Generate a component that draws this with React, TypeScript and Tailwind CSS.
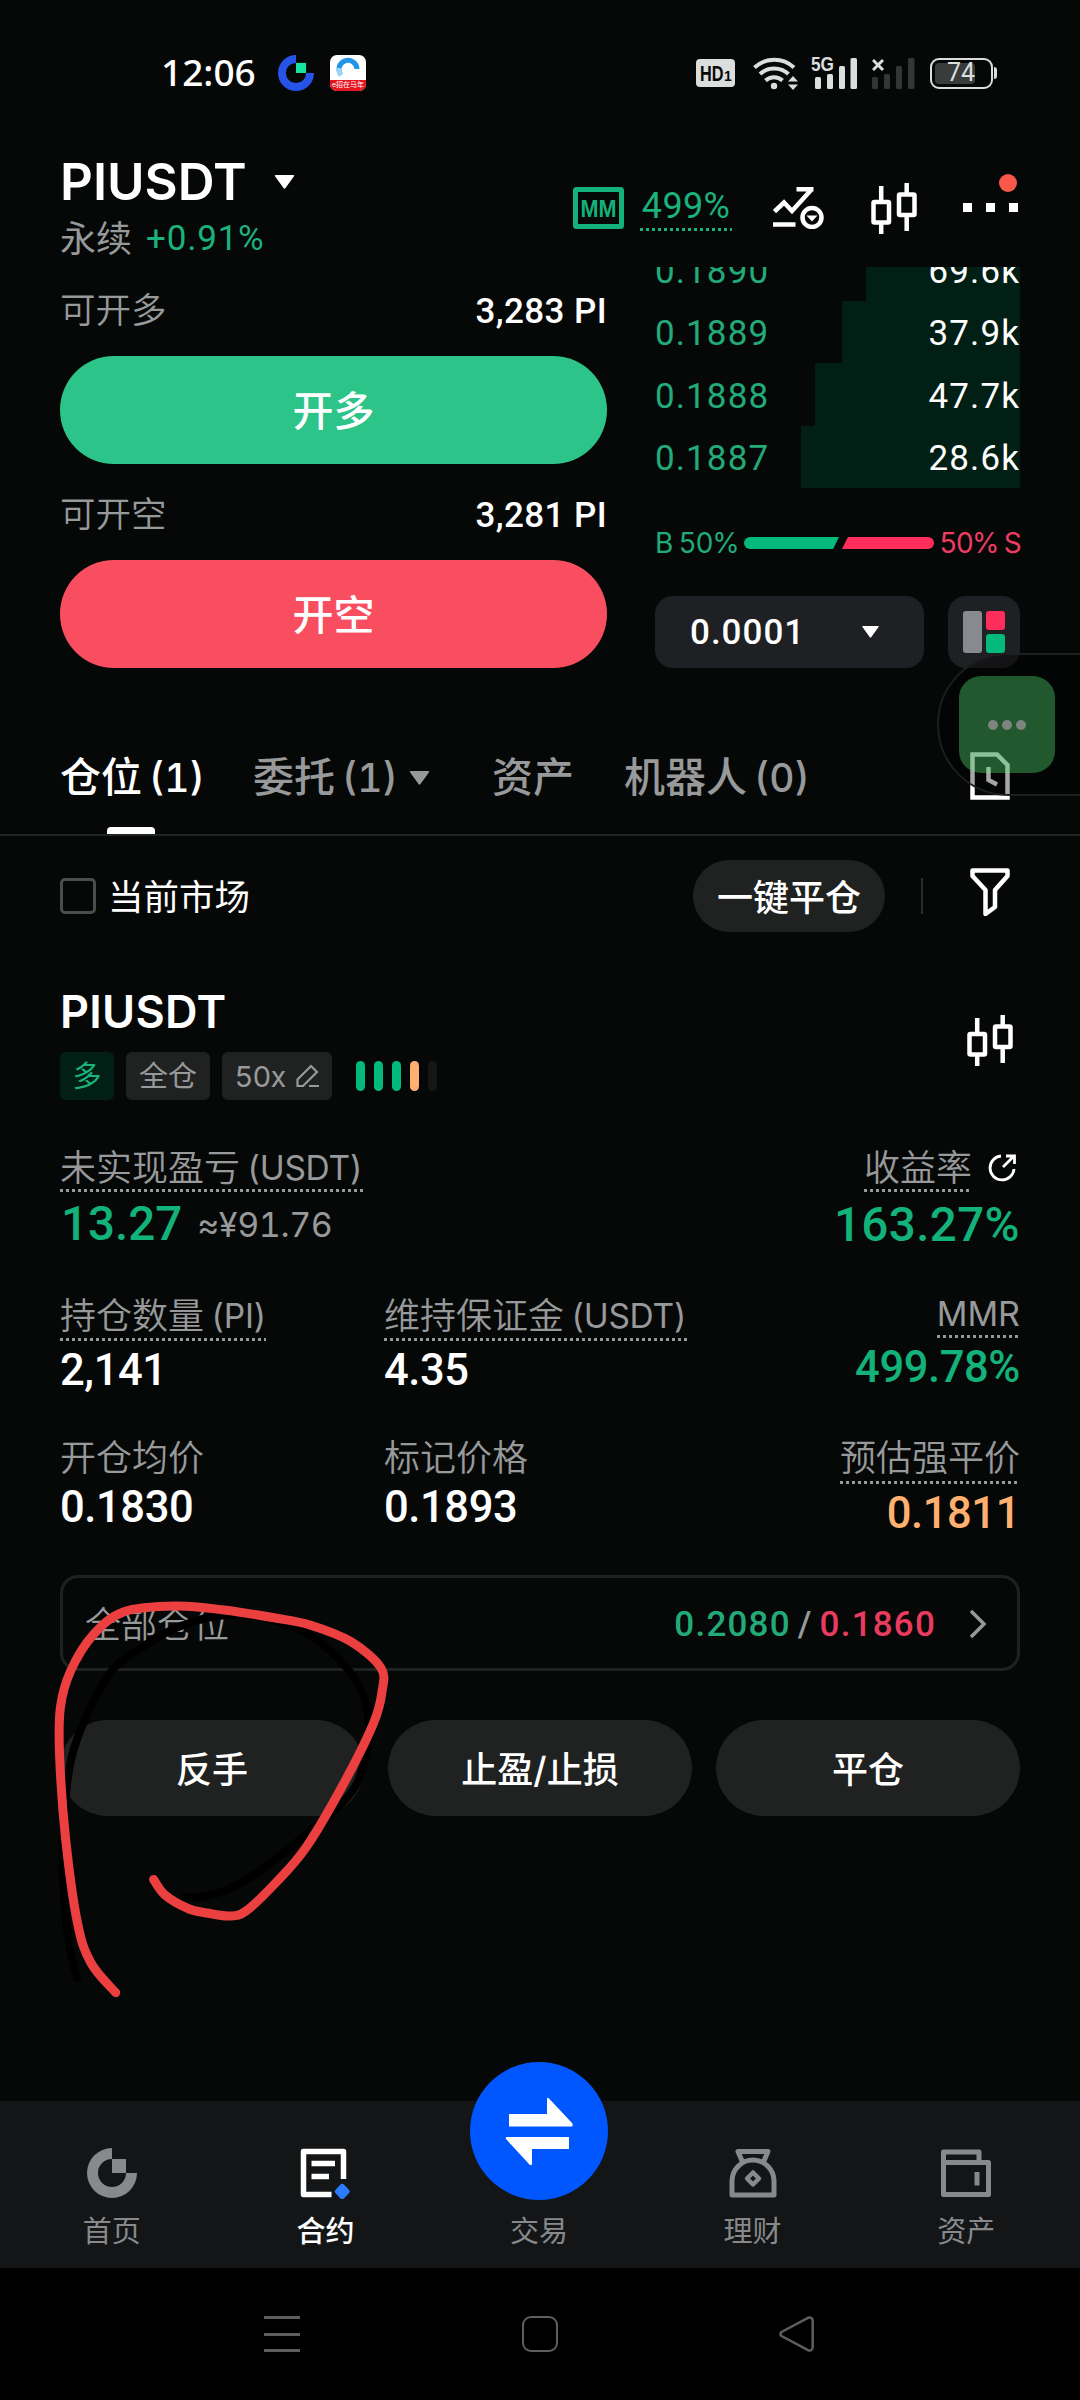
import type { ReactNode } from 'react'
import clsx from 'clsx'

const bids = [
  { price: '0.1890', size: '69.6k', depth: 154 },
  { price: '0.1889', size: '37.9k', depth: 178 },
  { price: '0.1888', size: '47.7k', depth: 205 },
  { price: '0.1887', size: '28.6k', depth: 219 },
]

const riskBars = ['bg-[#04b97c]', 'bg-[#04b97c]', 'bg-[#04b97c]', 'bg-[#ffb06f]', 'bg-[#151717]']

type Point = [number, number]

const redStroke: Point[] = [
  [153.6, 1879.5], [165, 1895], [188, 1908.5], [207, 1913], [229, 1916], [246, 1911], [275.5, 1883],
  [306.5, 1846.7], [344, 1783], [373.6, 1723], [382, 1691.7], [381, 1668], [351, 1641.7], [310, 1625],
  [275.5, 1618], [224, 1610], [175.6, 1606], [124, 1611.7], [93, 1635], [70.6, 1671], [60.5, 1706.7],
  [59.5, 1753], [65.4, 1836.7], [77.5, 1923], [91, 1963], [115.7, 1992.7],
]

const shadowStroke: Point[] = [
  [186, 1896.7], [207, 1896], [241, 1883], [286, 1851], [344, 1801], [363, 1766.7], [368.5, 1720],
  [356, 1680], [317, 1640], [275, 1621], [227, 1615], [179, 1626.7], [137.7, 1650], [110, 1673],
  [86, 1717], [71, 1760], [64.5, 1813], [63, 1880], [69, 1943], [77, 1978],
]

// Catmull-Rom through the points, written as cubic beziers
function smoothPath(pts: Point[]) {
  let d = `M${pts[0][0]} ${pts[0][1]}`
  for (let i = 0; i < pts.length - 1; i++) {
    const p0 = pts[i - 1] ?? pts[i]
    const p1 = pts[i]
    const p2 = pts[i + 1]
    const p3 = pts[i + 2] ?? p2
    d += ` C${p1[0] + (p2[0] - p0[0]) / 6} ${p1[1] + (p2[1] - p0[1]) / 6} ${p2[0] - (p3[0] - p1[0]) / 6} ${p2[1] - (p3[1] - p1[1]) / 6} ${p2[0]} ${p2[1]}`
  }
  return d
}

function Caret({ className }: { className?: string }) {
  return (
    <svg viewBox="0 0 20 14" className={className} fill="currentColor">
      <path d="M1 0H19Q20.300 0 19.500 1.200L11 13Q10 14.400 9 13L.5 1.200Q-.3 0 1 0Z" />
    </svg>
  )
}

function Candles() {
  return (
    <svg width="46" height="52" viewBox="0 0 46 52" fill="none" stroke="#fff" strokeWidth="4.500">
      <rect x="2.500" y="19" width="15.500" height="20.500" rx="1" />
      <rect x="28" y="11.500" width="15.500" height="20.500" rx="1" />
      <path d="M10.200 3v15M10.200 40v11M35.700 0v11M35.700 33v15" />
    </svg>
  )
}

function BrandMark({ ring, square, className }: { ring: string; square: string; className?: string }) {
  return (
    <svg viewBox="0 0 50 50" className={className}>
      <path d="M25 0A25 25 0 1 0 50 25H39A14 14 0 1 1 25 11Z" fill={ring} />
      <rect x="25" y="11" width="14" height="14" fill={square} />
    </svg>
  )
}

function Dots({ className }: { className?: string }) {
  return (
    <div
      className={clsx(
        'h-[3px] w-full bg-[repeating-linear-gradient(90deg,currentColor_0_3px,transparent_3px_6px)]',
        className,
      )}
    />
  )
}

function StatusBar() {
  return (
    <div className="h-[146px] shrink-0 flex items-center pl-[161px] pr-[83px]">
      <span className="w-[117px] -mt-[3px] font-['Noto_Sans'] text-[37px] leading-none font-medium">12:06</span>
      <BrandMark ring="#2654e8" square="#19e3a0" className="size-9" />
      <div className="ml-4 size-9 rounded-[7px] overflow-hidden bg-white flex flex-col items-center justify-between">
        <svg width="24" height="24" viewBox="0 0 24 24" className="mt-px" fill="none">
          <path d="M5 19A9 9 0 1 1 21 13" stroke="#2196e8" strokeWidth="5" />
          <path d="M5 19A9 9 0 0 1 3 12" stroke="#9bd4f8" strokeWidth="5" />
        </svg>
        <div className="w-full h-[11px] bg-[#e5141f] text-[7px] leading-[10px] text-center whitespace-nowrap">e招在马年</div>
      </div>

      <div className="ml-auto flex items-center text-[#dcdedd]">
        <svg width="39" height="28" viewBox="0 0 39 28" fill="#060807">
          <rect width="39" height="28" rx="4" fill="#dcdedd" />
          <text x="4" y="22" fontFamily="Liberation Sans" fontWeight="700" fontSize="22.500" textLength="23.500" lengthAdjust="spacingAndGlyphs">HD</text>
          <text x="28" y="22" fontFamily="Liberation Sans" fontWeight="700" fontSize="14">1</text>
        </svg>
        <svg width="46" height="36" viewBox="0 0 46 36" className="ml-[18px]" fill="none" stroke="#dcdedd" strokeWidth="4">
          <path d="M1.500 12.500A29 29 0 0 1 41 12.500M7 19A21 21 0 0 1 35.500 19M12.500 25.500A12.500 12.500 0 0 1 29.500 25.500" />
          <circle cx="21" cy="31" r="3.200" fill="#dcdedd" stroke="none" />
          <path d="M40 21l5 5.500H35zM40 35l-5-5.500h10z" fill="#dcdedd" stroke="none" />
        </svg>
        <svg width="48" height="34" viewBox="0 0 48 34" className="ml-3 overflow-visible" fill="#dcdedd">
          <text x="0" y="15" fontFamily="Liberation Sans" fontWeight="700" fontSize="20" textLength="23" lengthAdjust="spacingAndGlyphs">5G</text>
          <rect x="4" y="21" width="6" height="12" rx="1.500" />
          <rect x="16" y="18" width="6" height="15" rx="1.500" />
          <rect x="28" y="10" width="6" height="23" rx="1.500" />
          <rect x="39.500" y="2" width="6.500" height="31" rx="1.500" />
        </svg>
        <svg width="46" height="34" viewBox="0 0 46 34" className="ml-[13px]" fill="#343636">
          <path d="M1 4L11 14M11 4L1 14" stroke="#dcdedd" strokeWidth="3" />
          <rect x="0" y="21" width="6" height="12" rx="1.500" />
          <rect x="12" y="18" width="6" height="15" rx="1.500" />
          <rect x="24" y="10" width="6" height="23" rx="1.500" />
          <rect x="36" y="2" width="6.500" height="31" rx="1.500" />
        </svg>
        <div className="ml-3 w-[63px] h-[31px] rounded-[9px] border-[2.500px] border-[#dcdedd] p-[3px]">
          <div className="relative w-10 h-full rounded-[4px] bg-[#3a3b3b]">
            <span className="absolute left-[12px] top-[-3px] font-[Roboto] text-[25px] leading-[26px]">74</span>
          </div>
        </div>
        <div className="ml-px w-[3px] h-3 rounded-r bg-[#dcdedd]" />
      </div>
    </div>
  )
}

function Header() {
  return (
    <div className="h-[121px] shrink-0 flex justify-between pl-[60px] pr-[60px]">
      <div className="pt-[9px]">
        <div className="flex items-center">
          <h1 className="w-[214px] text-[51px] leading-[54px] font-semibold">PIUSDT</h1>
          <Caret className="w-[21px] h-[14px]" />
        </div>
        <div className="mt-3 flex items-center gap-[14px] leading-9">
          <span className="text-4xl leading-9 text-[#98999a]">永续</span>
          <span className="font-[Roboto] text-[35px] leading-9 tracking-[0.800px] text-[#1bb27c]">+0.91%</span>
        </div>
      </div>
      <div className="flex items-start h-full">
        <svg width="51" height="42" viewBox="0 0 51 42" className="mt-[41px]" fill="none">
          <rect x="2.500" y="2.500" width="46" height="37" rx="1" stroke="#13b27a" strokeWidth="5" />
          <text x="7.500" y="29.500" fontFamily="Liberation Sans" fontWeight="700" fontSize="24" fill="#13b27a" textLength="36" lengthAdjust="spacingAndGlyphs">MM</text>
        </svg>
        <div className="ml-4 mt-[40px] w-[92px] text-[#1bb27c]">
          <div className="font-[Roboto] text-[36px] leading-[40px] tracking-[0.300px] text-center whitespace-nowrap">499%</div>
          <Dots className="mt-[2px]" />
        </div>
        <svg width="51" height="42" viewBox="0 0 51 42" className="ml-[41px] mt-[41px]" fill="none" stroke="#fff" strokeWidth="4.500">
          <path d="M1.500 24.500L11 15.500L19 24L38.500 2.500M23.500 2.300H40.500M0 37.500H22.500" />
          <circle cx="39" cy="30.500" r="9.500" />
          <path d="M33.500 28.500h11L39 34.500z" fill="#fff" stroke="none" />
        </svg>
        <div className="ml-[47px] mt-[37px]">
          <Candles />
        </div>
        <div className="relative ml-[46px] mt-[57px] flex gap-[14px]">
          <i className="size-[9px] bg-white" />
          <i className="size-[9px] bg-white" />
          <i className="size-[9px] bg-white" />
          <i className="absolute right-px -top-[29px] size-[18px] rounded-full bg-[#f8594a]" />
        </div>
        <div className="w-[2px]" />
      </div>
    </div>
  )
}

function OrderSide({ label, amount, action, tone }: { label: string; amount: string; action: string; tone: string }) {
  return (
    <div>
      <div className="h-11 pt-[2px] flex items-center justify-between">
        <span className="text-[35.500px] leading-none font-[350] text-[#98999a]">{label}</span>
        <span className="font-[Roboto] text-[35px] leading-none font-medium tracking-[0.400px]">{amount}</span>
      </div>
      <button className={clsx('mt-6 w-full h-[108px] pt-[3px] rounded-full text-[41px] font-medium flex items-center justify-center', tone)}>
        {action}
      </button>
    </div>
  )
}

function TradePanel() {
  return (
    <div className="flex justify-between px-[60px]">
      <div className="w-[547px] pt-[21px] flex flex-col gap-7">
        <OrderSide label="可开多" amount="3,283 PI" action="开多" tone="bg-[#2cc489]" />
        <OrderSide label="可开空" amount="3,281 PI" action="开空" tone="bg-[#f94e60]" />
      </div>
      <div className="w-[365px]">
        <div className="h-[221px] overflow-hidden flex flex-col justify-end">
          {bids.map((b) => (
            <div key={b.price} className="relative h-[62.300px] pt-[3px] shrink-0 flex items-center justify-between font-[Roboto] text-[35px] leading-none tracking-[1.100px]">
              <div className="absolute right-0 inset-y-0 bg-[#011f15]" style={{ width: b.depth }} />
              <span className="text-[#22ab79]">{b.price}</span>
              <span className="relative">{b.size}</span>
            </div>
          ))}
        </div>
        <div className="mt-10 h-[30px] flex items-center justify-between text-[28px] leading-none whitespace-nowrap">
          <span className="text-[#22ab79] w-[84px] tracking-[-1.200px]">B 50%</span>
          <svg width="190" height="12" viewBox="0 0 190 12" className="shrink-0">
            <path d="M6 0H95L89 12H6A6 6 0 0 1 6 0Z" fill="#04b97c" />
            <path d="M104 0H184A6 6 0 0 1 184 12H98Z" fill="#ff2d5b" />
          </svg>
          <span className="text-[#ee3c62] tracking-[-1.700px]">50% S</span>
        </div>
        <div className="mt-[38px] flex justify-between">
          <div className="w-[269px] h-[72px] rounded-[18px] bg-[#1f2023] flex items-center justify-between pl-[35px] pr-[45px]">
            <span className="font-[Roboto] text-[35px] leading-none font-medium tracking-[1px]">0.0001</span>
            <Caret className="w-[17px] h-3" />
          </div>
          <div className="size-[72px] rounded-[18px] bg-[#1f2023] flex items-center justify-center gap-1">
            <div className="w-[19px] h-[42px] rounded-[3px] bg-[#888a8f]" />
            <div className="flex flex-col gap-1">
              <div className="size-[19px] rounded-[3px] bg-[#ff2d5b]" />
              <div className="size-[19px] rounded-[3px] bg-[#04b97c]" />
            </div>
          </div>
        </div>
      </div>
    </div>
  )
}

function Tabs() {
  return (
    <div className="h-[168px] shrink-0 border-b-2 border-[#222424] pl-[60px] pr-[70px] pt-[85px] flex items-start text-[41px] leading-[48px] font-medium text-[#98999a] whitespace-nowrap">
      <div className="relative w-[193px] h-full text-white">
        仓位 <span className="text-[39px] -ml-1">(1)</span>
        <i className="absolute left-[47px] bottom-0 w-12 h-[7px] rounded-t-[4px] bg-white" />
      </div>
      <div className="w-[239px] flex items-center">
        <span>委托 <span className="text-[39px] -ml-1">(1)</span></span>
        <Caret className="ml-[11px] w-[21px] h-[14px]" />
      </div>
      <div className="w-[132px]">资产</div>
      <div>机器人 <span className="text-[39px] -ml-1">(0)</span></div>
      <svg width="40" height="48" viewBox="0 0 40 48" className="ml-auto -mt-px" fill="none" stroke="#fff" strokeWidth="4.500">
        <path d="M2.500 2.500H27L37.500 13V45.500H2.500Z" />
        <path d="M18.500 15V28L27 32.500" />
      </svg>
    </div>
  )
}

function FilterRow() {
  return (
    <div className="mt-6 h-[72px] shrink-0 flex items-center pl-[60px] pr-[70px]">
      <div className="size-9 rounded-[5px] border-[3px] border-[#4b4c4c]" />
      <span className="ml-3 pt-[3px] text-[35.500px] leading-none">当前市场</span>
      <button className="ml-auto w-[192px] h-[72px] pt-[3px] rounded-full bg-[#202221] text-4xl leading-none font-medium">一键平仓</button>
      <div className="ml-9 w-[2px] h-9 bg-[#2a2c2c]" />
      <svg width="40" height="48" viewBox="0 0 40 48" className="ml-[47px] -mt-[9px]" fill="none" stroke="#fff" strokeWidth="4.500" strokeLinejoin="round">
        <path d="M2.500 2.500H37.500V8L25 22V39L15.500 46V22L2.500 8Z" />
      </svg>
    </div>
  )
}

interface MetricProps {
  label: string
  unit?: string
  value: ReactNode
  dotsClass?: string
  valueClass?: string
  className?: string
  right?: boolean
  extra?: ReactNode
}

function Metric({ label, unit, value, dotsClass, valueClass, className, right, extra }: MetricProps) {
  return (
    <div className={clsx('flex flex-col whitespace-nowrap', right ? 'items-end' : 'items-start', className)}>
      <div className="flex items-start text-[#98999a]">
        <div>
          <div className="h-11 pt-[2px] flex items-center">
            <span className={clsx('leading-[44px]', label === 'MMR' ? 'text-[34px]' : 'text-4xl font-[350]')}>{label}</span>
            {unit && <span className="ml-[7px] text-[33.500px] leading-[44px] tracking-[-0.300px]">{unit}</span>}
          </div>
          {dotsClass && <Dots className={dotsClass} />}
        </div>
        {extra}
      </div>
      <div className={valueClass}>{value}</div>
    </div>
  )
}

const valueText = 'font-[Roboto] text-[43.500px] leading-[46px] font-medium tracking-[-0.400px]'

function PositionCard() {
  return (
    <div className="px-[60px] pt-[57px]">
      <div className="flex justify-between h-[111px]">
        <div>
          <h2 className="text-[45px] leading-[46px] font-semibold tracking-[0.300px]">PIUSDT</h2>
          <div className="mt-[17px] h-12 flex items-center text-[29px] leading-none">
            <span className="w-[54px] h-12 rounded-[6px] bg-[#011f15] text-[#1bb27c] flex items-center justify-center">多</span>
            <span className="ml-3 w-[84px] h-12 pt-px rounded-[6px] bg-[#202221] text-[#98999a] flex items-center justify-center">全仓</span>
            <span className="ml-3 w-[110px] h-12 rounded-[6px] bg-[#202221] text-[#98999a] flex items-center justify-center gap-[10px]">
              <span className="tracking-[-0.800px]">50x</span>
              <svg width="24" height="24" viewBox="0 0 24 24" fill="none" stroke="currentColor" strokeWidth="2.200">
                <path d="M1.500 22V15.500L15 2L21 8L7 22Z M13 22H23" />
              </svg>
            </span>
            <div className="ml-6 flex gap-[9px]">
              {riskBars.map((c, i) => (
                <i key={i} className={clsx('w-[9px] h-[30px] rounded-full', c)} />
              ))}
            </div>
          </div>
        </div>
        <div className="mt-[26px] mr-[7px]">
          <Candles />
        </div>
      </div>

      <div className="mt-[45px] h-[105px] flex justify-between">
        <Metric
          label="未实现盈亏"
          unit="(USDT)"
          dotsClass="mt-0"
          valueClass="mt-2 h-[50px] flex items-center"
          value={
            <>
              <span className="ml-px font-[Roboto] text-[47.500px] leading-none font-medium text-[#13b27a]">13.27</span>
              <span className="ml-[15px] text-[34px] leading-none tracking-[-0.400px] text-[#98999a]">≈¥91.76</span>
            </>
          }
        />
        <Metric
          right
          label="收益率"
          dotsClass="mt-0"
          valueClass="mt-2 h-[50px] font-[Roboto] leading-[50px] text-[47.500px] font-medium tracking-[0.400px] text-[#13b27a]"
          value="163.27%"
          extra={
            <svg width="28" height="28" viewBox="0 0 28 28" className="ml-4 mr-1 mt-[9px]" fill="none" stroke="#fff" strokeWidth="2.800">
              <path d="M13 2A12 12 0 1 0 26 15M15 13L26 2M18 2H26.500V10" />
            </svg>
          }
        />
      </div>

      <div className="mt-[43px] h-[101px] grid grid-cols-[324px_1fr_auto]">
        <Metric label="持仓数量" unit="(PI)" dotsClass="mt-px" value="2,141" valueClass={clsx('mt-[7px]', valueText)} />
        <Metric label="维持保证金" unit="(USDT)" dotsClass="mt-px" value="4.35" valueClass={clsx('mt-[7px]', valueText)} />
        <Metric right className="-mt-[2px]" label="MMR" dotsClass="mt-0" value="499.78%" valueClass={clsx('mt-[7px] text-[#13b27a]', valueText)} />
      </div>

      <div className="mt-[41px] h-[102px] grid grid-cols-[324px_1fr_auto]">
        <Metric label="开仓均价" value="0.1830" valueClass={clsx('mt-[6px]', valueText)} />
        <Metric label="标记价格" value="0.1893" valueClass={clsx('mt-[6px]', valueText)} />
        <Metric right label="预估强平价" dotsClass="mt-[2px]" value="0.1811" valueClass={clsx('mt-[7px] text-[#ffb06f]', valueText)} />
      </div>

      <div className="mt-[38px] h-24 pt-[3px] rounded-[18px] border-[3px] border-[#202221] flex items-center pl-[22px] pr-[30px]">
        <span className="text-4xl leading-none font-[350] text-[#98999a]">全部仓位</span>
        <span className="ml-auto font-[Roboto] text-[35px] leading-none font-medium flex gap-[7px] tracking-[1.200px]">
          <span className="text-[#22ab79]">0.2080</span>
          <span className="text-[#98999a]">/</span>
          <span className="text-[#e93b5e]">0.1860</span>
        </span>
        <svg width="18" height="30" viewBox="0 0 18 30" className="ml-[33px] -mt-[2px]" fill="none" stroke="#98999a" strokeWidth="3.500">
          <path d="M2 2L15 15L2 28" />
        </svg>
      </div>

      <div className="mt-[49px] grid grid-cols-3 gap-6">
        {['反手', '止盈/止损', '平仓'].map((t) => (
          <button key={t} className="h-24 pt-[3px] rounded-full bg-[#202221] text-4xl leading-none font-medium">
            {t}
          </button>
        ))}
      </div>
    </div>
  )
}

const gray = '#87898b'

const navItems = [
  { label: '首页', icon: <BrandMark ring={gray} square={gray} className="size-[50px]" /> },
  {
    label: '合约',
    active: true,
    icon: (
      <svg width="50" height="51" viewBox="0 0 50 51" fill="none" stroke="#fff" strokeWidth="5.500">
        <path d="M43.500 31V3.500H3.500V46.500H31.500" strokeLinejoin="round" />
        <path d="M11.500 15.500H35M11.500 28.500H29" />
        <path d="M42.200 39L46.500 43.500L42.200 48L38 43.500Z" fill="#2b7bff" stroke="#2b7bff" strokeWidth="6" strokeLinejoin="round" />
      </svg>
    ),
  },
  { label: '交易', icon: null },
  {
    label: '理财',
    icon: (
      <svg width="50" height="51" viewBox="0 0 50 51" fill="none" stroke={gray} strokeWidth="5" strokeLinejoin="round">
        <path d="M10 3.500H40L35.500 14H14.500Z" />
        <path d="M4 47V33A21 21 0 0 1 46 33V47Z" fill="#131517" />
        <path d="M25 24.500L31 30.500L25 36.500L19 30.500Z" strokeWidth="4.500" />
      </svg>
    ),
  },
  {
    label: '资产',
    icon: (
      <svg width="50" height="51" viewBox="0 0 50 51" fill="none" stroke={gray} strokeWidth="5" strokeLinejoin="round">
        <path d="M2.500 14.500V4H38V14.500M2.500 14.500H47.500V46.500H2.500Z" />
        <path d="M36 24V37.500" />
      </svg>
    ),
  },
]

function BottomNav() {
  return (
    <div className="h-[167px] shrink-0 bg-[#131517] pl-[5px] pr-[7px] grid grid-cols-5">
      {navItems.map((n) => (
        <div key={n.label} className="relative flex flex-col items-center pt-[47px]">
          {n.icon ? (
            <div className="h-[51px]">{n.icon}</div>
          ) : (
            <div className="h-[51px]">
              <div className="absolute left-1/2 -translate-x-1/2 -top-[39px] size-[138px] rounded-full bg-[#0057ff] flex items-center justify-center">
                <svg width="68" height="68" viewBox="0 0 68 68" fill="#fff">
                  <path d="M4 17H42V2Q42 0 44 1.500L67 26Q69 29.500 66 29.500H4Z" />
                  <path d="M64 40V52H27V67Q26 70 24 67L1 42Q0 40 2 40Z" />
                </svg>
              </div>
            </div>
          )}
          <span className={clsx('mt-[17px] text-[29px] leading-[32px]', n.active ? 'text-white font-medium' : 'text-[#87898b]')}>{n.label}</span>
        </div>
      ))}
    </div>
  )
}

function SystemNav() {
  return (
    <div className="h-[132px] shrink-0 bg-black pl-[264px] pr-[265px] flex items-center justify-between">
      <div className="w-9 h-9 flex flex-col justify-between">
        <i className="h-[3px] bg-[#5e5e5e]" />
        <i className="h-[3px] bg-[#5e5e5e]" />
        <i className="h-[3px] bg-[#5e5e5e]" />
      </div>
      <div className="size-9 rounded-[9px] border-[2.500px] border-[#5e5e5e]" />
      <svg width="36" height="36" viewBox="0 0 36 36" fill="none" stroke="#5e5e5e" strokeWidth="2.500" strokeLinejoin="round">
        <path d="M29 1.800L2.500 16Q.5 18 2.500 20L29 34.200Q33.500 35.500 33.700 31V5Q33.500 .5 29 1.800Z" />
      </svg>
    </div>
  )
}

export default function App() {
  return (
    <div className="relative w-[1080px] h-[2400px] overflow-hidden bg-[#060807] text-white flex flex-col tabular-nums font-[Inter,'Noto_Sans_CJK_SC',sans-serif]">
      <StatusBar />
      <Header />
      <TradePanel />
      <Tabs />
      <FilterRow />
      <PositionCard />
      <div className="flex-1" />
      <BottomNav />
      <SystemNav />

      {/* floating assist button docked to the right edge */}
      <div className="absolute left-[937px] top-[653px] w-[160px] h-[143px] rounded-l-full border-2 border-[#1d1f1f] bg-black/35">
        <div className="absolute left-5 top-[21px] w-24 h-[97px] rounded-[22px] bg-[rgba(94,250,126,0.34)] flex items-center justify-center gap-1">
          <i className="size-[10px] rounded-full bg-[#7d857e]" />
          <i className="size-[10px] rounded-full bg-[#7d857e]" />
          <i className="size-[10px] rounded-full bg-[#7d857e]" />
        </div>
      </div>

      {/* hand-drawn marker */}
      <svg width="1080" height="2400" viewBox="0 0 1080 2400" className="absolute inset-0 pointer-events-none" fill="none" strokeLinecap="round" strokeLinejoin="round">
        <path d={smoothPath(shadowStroke)} stroke="#000" strokeWidth="8" />
        <path d={smoothPath(redStroke)} stroke="#ec4040" strokeWidth="9" />
      </svg>
    </div>
  )
}
